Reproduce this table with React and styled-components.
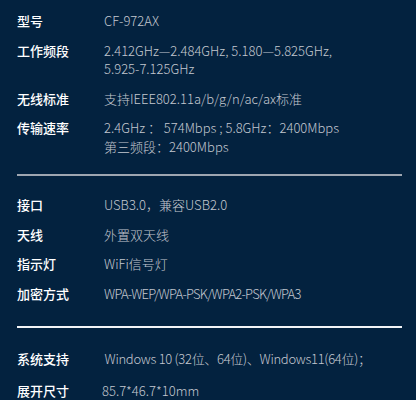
import styled, { createGlobalStyle } from 'styled-components'

const GlobalStyle = createGlobalStyle`
  html, body {
    margin: 0;
    padding: 0;
    background: #03223f;
  }
`

const Page = styled.div`
  width: 416px;
  height: 400px;
  overflow: hidden;
  background: #03223f;
  font-family: 'Noto Sans CJK SC', 'Noto Sans', sans-serif;
  padding: 0 14px 0 17px;
  box-sizing: border-box;
`

const Section = styled.div`
  display: flex;
  flex-direction: column;
  gap: ${(p) => p.gap}px;
  padding-top: ${(p) => p.top}px;
  padding-bottom: ${(p) => p.bottom}px;
`

const Divider = styled.div`
  height: ${(p) => p.thick}px;
  background: ${(p) => p.color};
`

const Row = styled.div`
  display: flex;
  align-items: flex-start;
  font-size: 13px;
  line-height: 18.5px;
`

const Label = styled.div`
  width: ${(p) => p.w}px;
  flex-shrink: 0;
  color: #ffffff;
  font-weight: 500;
`

const Value = styled.div`
  color: #c3c8d0;
  font-weight: 300;
  white-space: pre;
  letter-spacing: ${(p) => p.tight || 0}px;
`

const specs = [
  {
    top: 12, bottom: 18, gap: 11, w: 87,
    rows: [
      ['型号', 'CF-972AX'],
      ['工作频段', '2.412GHz—2.484GHz, 5.180—5.825GHz,\n5.925-7.125GHz'],
      ['无线标准', '支持IEEE802.11a/b/g/n/ac/ax标准'],
      ['传输速率', '2.4GHz ： 574Mbps ; 5.8GHz：2400Mbps\n第三频段：2400Mbps'],
    ],
  },
  {
    top: 20, bottom: 23, gap: 11, w: 87,
    rows: [
      ['接口', 'USB3.0，兼容USB2.0'],
      ['天线', '外置双天线'],
      ['指示灯', 'WiFi信号灯'],
      ['加密方式', 'WPA-WEP/WPA-PSK/WPA2-PSK/WPA3', -0.75],
    ],
  },
  {
    top: 22, bottom: 0, gap: 13.5, w: 85,
    rows: [
      ['系统支持', ' Windows 10 (32位、64位)、Windows11(64位)；', -0.3],
      ['展开尺寸', '85.7*46.7*10mm'],
    ],
  },
]

const dividers = [
  { color: '#9ea6b1', thick: 2 },
  { color: '#f2f4f6', thick: 1.5 },
]

function App() {
  return (
    <>
      <GlobalStyle />
      <Page>
        {specs.map((section, i) => (
          <div key={i}>
            <Section top={section.top} bottom={section.bottom} gap={section.gap}>
              {section.rows.map(([label, value, tight]) => (
                <Row key={label}>
                  <Label w={section.w}>{label}</Label>
                  <Value tight={tight}>{value}</Value>
                </Row>
              ))}
            </Section>
            {dividers[i] && <Divider color={dividers[i].color} thick={dividers[i].thick} />}
          </div>
        ))}
      </Page>
    </>
  )
}

export default App
